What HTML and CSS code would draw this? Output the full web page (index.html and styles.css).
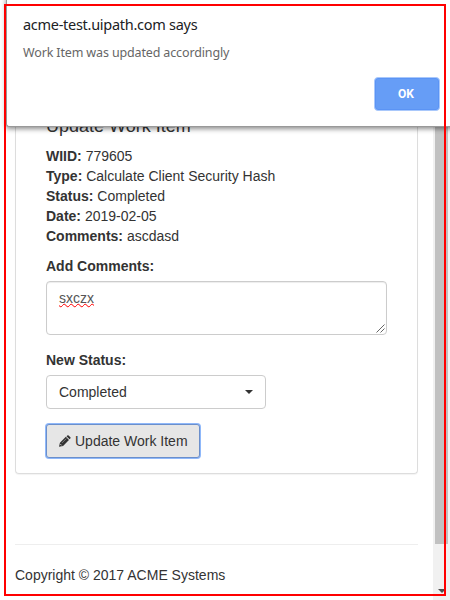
FILE: index.html
```
<!DOCTYPE html>
<html lang="en">
<head>
<meta charset="utf-8">
<title>Update Work Item</title>
<link rel="stylesheet" href="styles.css">
</head>
<body>
<div class="window">
  <main class="page">
    <section class="card">
      <h4 class="heading">Update Work Item</h4>
      <div class="details">
        <div><b>WIID:</b> 779605</div>
        <div><b>Type:</b> Calculate Client Security Hash</div>
        <div><b>Status:</b> Completed</div>
        <div><b>Date:</b> 2019-02-05</div>
        <div><b>Comments:</b> ascdasd</div>
      </div>
      <div class="label">Add Comments:</div>
      <div class="comments"><span class="misspelled">sxczx</span>
        <svg class="grip" width="9" height="9" viewBox="0 0 9 9"><path d="M0.5 8.5L8.5 0.5M4.5 8.5L8.5 4.5" stroke="#666" stroke-width="1"/></svg>
      </div>
      <div class="label">New Status:</div>
      <div class="select"><span>Completed</span><i class="caret"></i></div>
      <button class="submit"><svg width="12" height="12" viewBox="0 0 13 13"><path d="M0 12.6L1 8.4L7.4 2L10.8 5.4L4.4 11.8ZM8.1 1.4L9 .5Q9.7-.1 10.4.5L12.3 2.4Q12.9 3.1 12.3 3.8L11.4 4.7Z" fill="#333"/><path d="M3.2 8.6L7.9 3.9" stroke="#bbb" stroke-width=".6"/><path d="M1.5 9.9L2.8 11.2" stroke="#e6e6e6" stroke-width="1"/></svg><span>Update Work Item</span></button>
    </section>
    <footer class="footer">Copyright © 2017 ACME Systems</footer>
  </main>
  <aside class="scrollbar"><div class="thumb"></div><i class="arrow"></i></aside>
</div>
<div class="dialog">
  <div class="origin">acme-test.uipath.com says</div>
  <div class="message">Work Item was updated accordingly</div>
  <button class="ok">OK</button>
</div>
<div class="frame"></div>
</body>
</html>
```
FILE: styles.css
```
* { box-sizing: border-box; }
body {
  margin: 0;
  width: 450px;
  height: 600px;
  position: relative;
  overflow: hidden;
  background: #fff;
  color: #333;
  font: 14px/20px "Liberation Sans", Arial, sans-serif;
}
.window { display: flex; height: 600px; }
.page { flex: 1; padding: 86px 15px 0; }
.card {
  height: 388px;
  padding: 30px 30px 0;
  border: 1px solid #ddd;
  border-top: 0;
  border-radius: 4px;
  box-shadow: 0 1px 1px rgba(0, 0, 0, .05);
}
.heading { margin: 0 0 10px; font-size: 18px; line-height: 20px; font-weight: 400; }
.details { margin-bottom: 10px; }
.label { margin-bottom: 5px; font-weight: 700; }
.comments, .select {
  border: 1px solid #ccc;
  border-radius: 4px;
  padding: 6px 12px;
}
.comments {
  position: relative;
  width: 341px;
  height: 54px;
  margin-bottom: 15px;
  color: #555;
  box-shadow: inset 0 1px 1px rgba(0, 0, 0, .075);
}
.misspelled {
  text-decoration: underline wavy #f00;
  text-decoration-thickness: 1px;
  text-underline-offset: 0;
  text-decoration-skip-ink: none;
}
.grip { position: absolute; right: 1px; bottom: 1px; }
.select {
  display: flex;
  align-items: center;
  justify-content: space-between;
  width: 220px;
  height: 34px;
  margin-bottom: 15px;
}
.caret, .arrow {
  border: 4px solid transparent;
  border-top-color: #333;
  border-bottom: 0;
}
.submit {
  display: flex;
  align-items: center;
  gap: 4px;
  width: 154px;
  height: 34px;
  padding: 0 0 0 12px;
  border: 1px solid #6b8fcb;
  border-radius: 3px;
  background: #e6e6e6;
  box-shadow: 0 0 0 1px #8fb8fa;
  color: #333;
  font: inherit;
  white-space: nowrap;
}
.footer { margin-top: 70px; padding-top: 20px; border-top: 1px solid #eee; }
.scrollbar {
  display: flex;
  flex-direction: column;
  align-items: center;
  width: 17px;
  background: #f1f1f1;
}
.thumb { width: 13px; height: 544px; background: #c1c1c1; }
.arrow { margin-top: 45px; border-top-color: #505050; }
.dialog {
  position: absolute;
  left: 6px;
  top: -4px;
  width: 450px;
  height: 131px;
  padding: 17px 17px 0;
  border-left: 1px solid #999;
  border-bottom: 1px solid #999;
  border-radius: 0 0 0 3px;
  background: #fff;
  box-shadow: 0 2px 5px rgba(0, 0, 0, .45);
  font-family: "Noto Sans", sans-serif;
  white-space: nowrap;
}
.origin {
  margin-left: -1px;
  font-size: 14.5px;
  line-height: 22px;
  letter-spacing: -.28px;
  color: #202124;
}
.message {
  margin: 8px 0 0 -1px;
  font-size: 12.5px;
  line-height: 20px;
  letter-spacing: -.14px;
  color: #666;
}
.ok {
  display: block;
  width: 66px;
  height: 34px;
  margin: 14px 0 0 350px;
  padding: 0 2px 0 0;
  border: 1px solid #a9c8fb;
  border-radius: 4px;
  background: #669df6;
  box-shadow: inset 0 0 0 1px #5b94f5;
  color: #fff;
  font: 700 12px/30px Roboto, sans-serif;
}
.frame {
  position: absolute;
  left: 4px;
  top: 4px;
  width: 442px;
  height: 592px;
  border: 2px solid #f00;
  pointer-events: none;
}
```
